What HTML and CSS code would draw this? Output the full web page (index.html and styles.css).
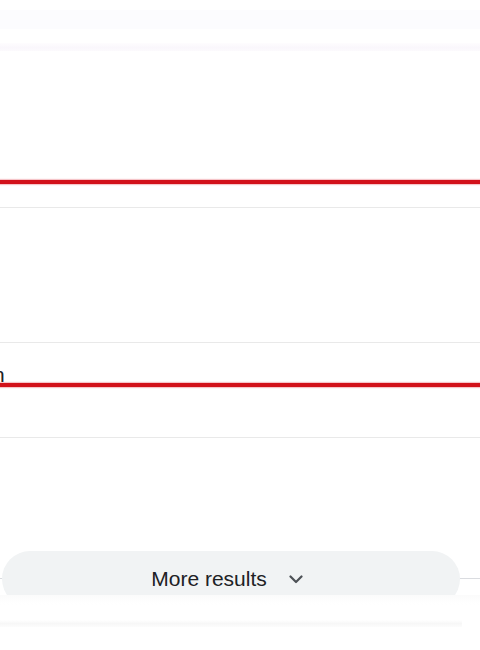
FILE: index.html
```html
<!DOCTYPE html>
<html lang="en">
<head>
<meta charset="utf-8">
<title>Results</title>
<link rel="stylesheet" href="styles.css">
</head>
<body>
<div class="page">
  <div class="band band-top"></div>
  <div class="band band-tint"></div>
  <div class="progress progress-first"></div>
  <div class="rule rule-a"></div>
  <div class="rule rule-b"></div>
  <div class="result-tail">n</div>
  <div class="progress progress-second"></div>
  <div class="rule rule-c"></div>
  <div class="more-wrap">
    <div class="more-line"></div>
    <button class="more-btn" type="button">
      <span class="more-label">More results</span>
      <svg class="chev" width="14" height="9" viewBox="0 0 14 9" aria-hidden="true"><path d="M1.5 1.5 L7 7 L12.5 1.5" fill="none" stroke="#4d5156" stroke-width="2.2" stroke-linecap="round" stroke-linejoin="round"/></svg>
    </button>
    <div class="fade">
      <div class="fade-bar"></div>
    </div>
  </div>
</div>
</body>
</html>
```
FILE: styles.css
```css
html, body {
  margin: 0;
  padding: 0;
  background: #ffffff;
}
body {
  width: 480px;
  height: 650px;
  overflow: hidden;
  font-family: "Liberation Sans", Arial, sans-serif;
  color: #202124;
}
.page {
  display: flex;
  flex-direction: column;
}
.band-top {
  margin-top: 10px;
  height: 19px;
  background: #fcfcfe;
}
.band-tint {
  margin-top: 14px;
  height: 8px;
  background: linear-gradient(to bottom, #fefdfe 0%, #faf7fc 55%, #fcfafd 100%);
}
.progress {
  height: 4px;
  background: #d2111a;
  box-shadow: 0 0 1px 1px rgba(230, 90, 100, 0.35);
}
.progress-first {
  margin-top: 129px;
}
.rule {
  height: 1px;
  background: #e9e9e9;
}
.rule-a {
  margin-top: 23px;
}
.rule-b {
  margin-top: 134px;
}
.result-tail {
  margin-top: 24px;
  margin-left: -7px;
  font-size: 21px;
  line-height: 16px;
  height: 16px;
  color: #202124;
}
.progress-second {
  margin-top: 0;
}
.rule-c {
  margin-top: 50px;
}
.more-wrap {
  position: relative;
  margin-top: 113px;
  height: 100px;
}
.more-line {
  position: absolute;
  left: 0;
  right: 0;
  top: 27px;
  height: 1px;
  background: #dadce0;
}
.more-btn {
  position: relative;
  margin-left: 2px;
  width: 458px;
  height: 56px;
  border: 0;
  border-radius: 28px;
  background: #f1f3f4;
  display: flex;
  align-items: center;
  justify-content: center;
  gap: 22px;
  padding: 0 8px 0 0;
  font-family: "Liberation Sans", Arial, sans-serif;
  font-size: 21px;
  color: #202124;
}
.more-label {
  line-height: 24px;
}
.chev {
  display: block;
}
.fade {
  position: absolute;
  left: 0;
  right: 0;
  top: 44px;
  bottom: 0;
  background: linear-gradient(to bottom, #fbfbfb 0px, #fefefe 6px, #ffffff 10px);
}
.fade-bar {
  margin-top: 25px;
  width: 462px;
  height: 7px;
  background: linear-gradient(to bottom, #ffffff 0%, #f7f7f7 50%, #fcfcfc 100%);
}
```
